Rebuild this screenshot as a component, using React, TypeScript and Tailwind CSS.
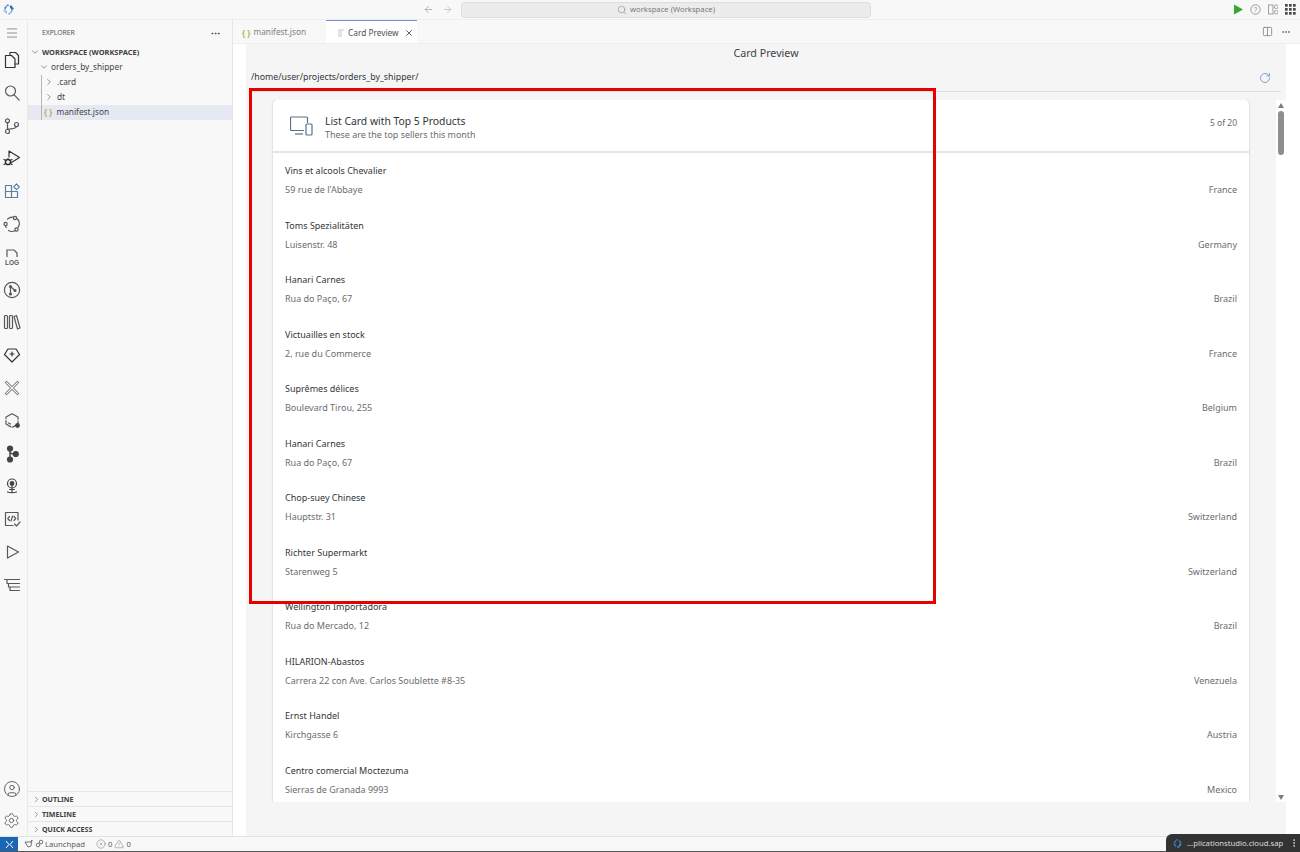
import React from "react";
import { ArrowLeft, ArrowRight, ChevronDown, ChevronRight, CircleUser, CircleX, Ellipsis, EllipsisVertical, Menu, RotateCw, Search, Settings, TriangleAlert, X, Columns2 } from "lucide-react";

const rows: [string, string, string][] = [
  ["Vins et alcools Chevalier", "59 rue de l'Abbaye", "France"],
  ["Toms Spezialitäten", "Luisenstr. 48", "Germany"],
  ["Hanari Carnes", "Rua do Paço, 67", "Brazil"],
  ["Victuailles en stock", "2, rue du Commerce", "France"],
  ["Suprêmes délices", "Boulevard Tirou, 255", "Belgium"],
  ["Hanari Carnes", "Rua do Paço, 67", "Brazil"],
  ["Chop-suey Chinese", "Hauptstr. 31", "Switzerland"],
  ["Richter Supermarkt", "Starenweg 5", "Switzerland"],
  ["Wellington Importadora", "Rua do Mercado, 12", "Brazil"],
  ["HILARION-Abastos", "Carrera 22 con Ave. Carlos Soublette #8-35", "Venezuela"],
  ["Ernst Handel", "Kirchgasse 6", "Austria"],
  ["Centro comercial Moctezuma", "Sierras de Granada 9993", "Mexico"],
];

const S = ({ children, size = 18, vb = 18 }: { children: React.ReactNode; size?: number; vb?: number }) => (
  <svg width={size} height={size} viewBox={`0 0 ${vb} ${vb}`} fill="none" stroke="#55595e" strokeWidth={1.2} strokeLinecap="round" strokeLinejoin="round">
    {children}
  </svg>
);

const activity: React.ReactNode[] = [
  <S key="files"><path d="M7 4V1.500h5.500l3 3v8.500h-3.500" stroke="#333" /><path d="M2.500 4.500h6l3.500 3.500v8.500H2.500z" stroke="#333" /></S>,
  <S key="search"><circle cx="7.500" cy="7" r="5" /><path d="M11.200 10.800l5 5.400" /></S>,
  <S key="scm"><circle cx="4.500" cy="3.800" r="2" /><circle cx="4.500" cy="14.500" r="2" /><circle cx="13.500" cy="7.500" r="2" /><path d="M4.500 5.800v6.700M13.500 9.500c0 2.500-6 2-9 3" /></S>,
  <S key="debug"><path d="M6 2l10.500 6.500L8.500 13.500M6 2v6" stroke="#333" /><circle cx="5" cy="13" r="2.600" stroke="#333" strokeWidth={1.5} /><path d="M1 10.500l1.800 1M1 15.500l1.800-1M9 10.500l-1.800 1M9 15.500l-1.800-1M5 9.500v1" stroke="#333" /></S>,
  <S key="ext"><path d="M2.500 3.500h6v6h-6zM2.500 9.500h6v6h-6zM8.500 9.500h6v6h-6z" stroke="#5d7fa3" /><path d="M13.500 2l2.800 2.800-2.800 2.800-2.800-2.800z" stroke="#5d7fa3" /></S>,
  <S key="graph"><path d="M4.500 4.200a7 7 0 0 1 5.500-2.100M14.500 4A7 7 0 0 1 15 12.500M12 15.800a7 7 0 0 1-6.500-.300M3.200 12.500a7 7 0 0 1-.8-1.500" /><circle cx="12" cy="3" r="1.600" /><circle cx="2.600" cy="9" r="1.600" /><circle cx="13.500" cy="14.500" r="1.600" /></S>,
  <svg key="log" width="18" height="18" viewBox="0 0 18 18" fill="none" stroke="#55595e" strokeWidth="1.2"><path d="M4 9V2h7l3 3v4" /><text x="9" y="16.500" textAnchor="middle" fontSize="6.500" fontWeight="700" fill="#55595e" stroke="none" fontFamily="Liberation Sans">LOG</text></svg>,
  <S key="git"><circle cx="9" cy="9" r="7.600" /><circle cx="7.500" cy="5.500" r="1" fill="#55595e" /><circle cx="7.500" cy="13" r="1" fill="#55595e" /><circle cx="12" cy="9.500" r="1" fill="#55595e" /><path d="M7.500 5.500V13M7.500 5.500L12 9.500" /></S>,
  <S key="lib"><rect x="1.500" y="2.500" width="3" height="13" rx="1" /><rect x="6.500" y="2.500" width="3" height="13" rx="1" /><path d="M11 3.500l2.500-1 3.500 12.500-2.500 1z" /></S>,
  <S key="gem"><path d="M5 3h8l3.500 5.500L9 16 1.500 8.500z" stroke="#333" /><path d="M9 6v4M7 8h4" stroke="#333" /></S>,
  <S key="tools"><path d="M3.500 3.500l11 11M14.500 3.500l-11 11" strokeWidth={2.800} stroke="#666" /><path d="M3.500 3.500l11 11M14.500 3.500l-11 11" strokeWidth={1.100} stroke="#f8f8f8" /></S>,
  <S key="hex"><path d="M9 1.800l6 3.200v7l-6 3.500-6-3.500V5z" strokeDasharray="9 2" /><circle cx="14.500" cy="13.500" r="2.400" fill="#444" stroke="none" /><path d="M5.500 11l2 1" /></S>,
  <svg key="nodes" width="18" height="18" viewBox="0 0 18 18" fill="none" stroke="#444" strokeWidth="1.400"><path d="M7 4v10M7 6c0 3 2 3 5 3" /><circle cx="7" cy="3.500" r="2.400" fill="#444" /><circle cx="7" cy="14.500" r="2.400" fill="#444" /><circle cx="12.800" cy="9" r="2.400" fill="#444" /></svg>,
  <S key="bulb"><circle cx="9" cy="6.500" r="4.500" stroke="#444" /><circle cx="9" cy="6.500" r="1.800" fill="#444" stroke="#444" /><path d="M9 9v6M4.500 15c2 1 7 1 9 0M6.500 12.500h5" stroke="#444" /></S>,
  <svg key="code" width="18" height="18" viewBox="0 0 18 18" fill="none" stroke="#55595e" strokeWidth="1.200" strokeLinecap="round" strokeLinejoin="round"><path d="M10 15.500H2.500v-13h12.500V10" /><path d="M6.500 6.500L4.800 8.500l1.700 2M11 6.500l1.700 2-1.700 2M9.600 6l-1.600 5" /><path d="M11.500 14l2 2 3.500-4" /></svg>,
  <S key="play"><path d="M4.500 3l11 6-11 6z" /></S>,
  <S key="tree"><path d="M1.500 3.500h15M4 7.500h12.500M5.500 11h11M7 14.500h9.500M4 3.500v4M5.500 7.500v3.500M7 11v3.500" /></S>,
];

const Row = ({ pad, children, active }: { pad: string; children: React.ReactNode; active?: boolean }) => (
  <div className={`flex items-center h-[15px] text-[8.300px] leading-[12px] text-[#424549] ${pad} ${active ? "bg-[#e6e8f2]" : ""}`}>{children}</div>
);

const Section = ({ label }: { label: string }) => (
  <div className="flex items-center h-[15px] pl-[4px] gap-[1px] border-t border-[#e6e6e6] text-[7.100px] leading-[12px] font-bold text-[#3c3f44]">
    <ChevronRight size={9} strokeWidth={1.500} color="#555" />
    {label}
  </div>
);

export default function App() {
  return (
    <div className="relative flex flex-col w-[1300px] h-[852px] overflow-hidden bg-white font-['Noto_Sans','Liberation_Sans',sans-serif]">
      {/* Title bar */}
      <div className="flex items-center h-[20px] shrink-0 bg-[#f8f8f8] border-b border-[#eeeeee]">
        <div className="w-[15px] ml-[1px] flex justify-center">
          <svg width="13" height="13" viewBox="0 0 13 13"><path d="M2 5l4-4 1 2H5L3.500 6.500z" fill="#3b82c4" /><path d="M11 8l-4 4-1-2h2l1.500-3.500z" fill="#6aa8de" /><path d="M1 7l2.500-1 2 3.500L4 11z" fill="#9cc7ec" /><path d="M12 6L9.500 7 7.500 3.500 9 2z" fill="#2a6fb0" /></svg>
        </div>
        <div className="flex items-center gap-[8px] ml-[407px]">
          <ArrowLeft size={11} color="#8e9196" strokeWidth={1.400} />
          <ArrowRight size={11} color="#b0b2b6" strokeWidth={1.400} />
        </div>
        <div className="flex items-center justify-center gap-[3px] w-[410px] h-[16px] ml-[8px] rounded-[4px] bg-[#ececec] border border-[#dddddd] text-[7.700px] text-[#777a7e]">
          <Search size={10} color="#888" strokeWidth={1.400} />
          workspace (Workspace)
        </div>
        <div className="flex items-center gap-[7px] ml-auto mr-[4px]">
          <svg width="10" height="11" viewBox="0 0 10 11"><path d="M1 0.500l9 5-9 5z" fill="#35a82f" /></svg>
          <svg width="11" height="11" viewBox="0 0 11 11" fill="none" stroke="#9a9a9a"><circle cx="5.500" cy="5.500" r="4.700" /><text x="5.500" y="8" textAnchor="middle" fontSize="7" fill="#888" stroke="none" fontFamily="Liberation Sans">?</text></svg>
          <svg width="10" height="11" viewBox="0 0 10 11" fill="none" stroke="#9aa0a6"><rect x="0.500" y="1" width="4.500" height="9" /><rect x="6.500" y="1" width="3.500" height="3.500" rx="1.500" /><rect x="6.500" y="6.500" width="3.500" height="3.500" rx="1.500" /></svg>
          <svg width="11" height="11" viewBox="0 0 11 11" fill="#4a4a4a">
            {[0, 4, 8].flatMap((y) => [0, 4, 8].map((x) => <rect key={`${x}-${y}`} x={x} y={y} width="2.700" height="2.700" />))}
          </svg>
        </div>
      </div>

      {/* Middle */}
      <div className="flex flex-1 min-h-0">
        {/* Activity bar */}
        <div className="flex flex-col items-center w-[28px] shrink-0 bg-[#f8f8f8] border-r border-[#eaeaea] pt-[6px] pr-[4px] pb-[7px]">
          <Menu size={14} color="#666" strokeWidth={1.200} />
          <div className="flex flex-col items-center gap-[14.800px] mt-[11px]">
            {activity}
          </div>
          <div className="flex flex-col items-center gap-[14px] mt-auto">
            <CircleUser size={18} color="#55595e" strokeWidth={1.200} />
            <Settings size={17} color="#55595e" strokeWidth={1.200} />
          </div>
        </div>

        {/* Explorer */}
        <div className="flex flex-col w-[205px] shrink-0 bg-[#f8f8f8] border-r border-[#e6e6e6]">
          <div className="flex items-center justify-between h-[24px] pt-[2px] pl-[14px] pr-[11px] text-[6.800px] text-[#54575b]">
            EXPLORER
            <Ellipsis size={11} color="#444" />
          </div>
          <div className="flex flex-col">
            <div className="flex items-center h-[15px] pl-[2px] gap-[2px] text-[7.450px] leading-[12px] font-bold text-[#3c3f44]">
              <ChevronDown size={10} strokeWidth={1.500} color="#555" /> WORKSPACE (WORKSPACE)
            </div>
            <Row pad="pl-[11px] gap-[2px] mt-[0.500px]"><ChevronDown size={10} strokeWidth={1.500} color="#555" /> orders_by_shipper</Row>
            <Row pad="pl-[13px]"><div className="flex items-center gap-[3px] h-full border-l border-[#b5b5b5] pl-[2px]"><ChevronRight size={10} strokeWidth={1.500} color="#555" /> .card</div></Row>
            <Row pad="pl-[13px]"><div className="flex items-center gap-[3px] h-full border-l border-[#b5b5b5] pl-[2px]"><ChevronRight size={10} strokeWidth={1.500} color="#555" /> dt</div></Row>
            <Row pad="pl-[13px]" active><div className="flex items-center gap-[4px] h-full border-l border-[#b5b5b5] pl-[2px]"><span className="text-[8px] font-bold text-[#b5b15a]">{"{ }"}</span> manifest.json</div></Row>
          </div>
          <div className="mt-auto">
            <Section label="OUTLINE" />
            <Section label="TIMELINE" />
            <Section label="QUICK ACCESS" />
          </div>
        </div>

        {/* Editor */}
        <div className="flex flex-col flex-1 min-w-0">
          <div className="flex h-[24px] shrink-0 bg-[#f8f8f8] border-b border-[#eeeeee]">
            <div className="flex items-center w-[93px] pl-[9px] pt-[2px] gap-[3px] text-[8.300px] text-[#7c7f83] whitespace-nowrap">
              <span className="text-[8px] font-bold text-[#b5b15a]">{"{ }"}</span> manifest.json
            </div>
            <div className="flex items-center w-[91px] pl-[11px] pt-[2px] gap-[3px] bg-white border-t border-[#6f8fd0] text-[8.300px] text-[#4c4f53] whitespace-nowrap">
              <svg width="8" height="8" viewBox="0 0 8 8" stroke="#c6c6c6"><path d="M1 1h6M1 3h4M1 5h4M1 7h4" /></svg>
              Card Preview
              <X size={10} color="#444" className="ml-[2px]" />
            </div>
            <div className="flex items-center gap-[8px] ml-auto mr-[9px]">
              <Columns2 size={11} color="#6f5f66" strokeWidth={1.400} />
              <Ellipsis size={10} color="#555" />
            </div>
          </div>
          <div className="flex flex-1 min-h-0">
            <div className="w-[13px] shrink-0 bg-white" />
            <div className="flex flex-col w-[1040px] shrink-0 bg-[#f5f5f5]">
              <div className="text-center text-[10.700px] leading-[16px] mt-[1px] text-[#3f4246]">Card Preview</div>
              <div className="flex items-center justify-between h-[31px] pt-[3px] ml-[5px] mr-[5px] border-b border-[#dedede] text-[8.800px] text-[#33363a]">
                /home/user/projects/orders_by_shipper/
                <RotateCw size={12} color="#4f7fc0" strokeWidth={1.400} className="mr-[10px]" />
              </div>
              <div className="flex flex-1 min-h-0 mt-[8px] mb-[34px]">
                <div className="flex-1 min-w-0 pl-[27px] pr-[27px] overflow-hidden">
                  <div className="bg-white rounded-t-[4px] shadow-[0_0_2px_rgba(0,0,0,0.25)]">
                    <div className="flex items-center h-[53px] pl-[17px] pr-[12px] border-b-2 border-[#e5e5e5]">
                      <svg width="23" height="20" viewBox="0 0 23 20" fill="none" stroke="#54718f" strokeWidth="1.200" className="shrink-0">
                        <path d="M14 14.500H1.500a1 1 0 0 1-1-1V2a1 1 0 0 1 1-1h15a1 1 0 0 1 1 1v5" />
                        <path d="M5 18h8" />
                        <rect x="16" y="8" width="6" height="11" rx="1" />
                      </svg>
                      <div className="flex flex-col ml-[12px] mt-[4px]">
                        <span className="text-[10.350px] leading-[14px] text-[#32363a]">List Card with Top 5 Products</span>
                        <span className="text-[8.950px] leading-[14px] text-[#6a6d70]">These are the top sellers this month</span>
                      </div>
                      <span className="ml-auto mb-[5px] text-[8.500px] text-[#6a6d70]">5 of 20</span>
                    </div>
                    {rows.map(([name, addr, country], i) => (
                      <div key={i} className="flex flex-col h-[54.500px] pt-[11px] px-[12px]">
                        <span className="text-[9px] leading-[14px] text-[#32363a]">{name}</span>
                        <div className="flex justify-between mt-[5px] text-[9px] leading-[14px] text-[#6a6d70]">
                          <span>{addr}</span>
                          <span>{country}</span>
                        </div>
                      </div>
                    ))}
                  </div>
                </div>
                <div className="flex flex-col items-center w-[10px] shrink-0 bg-white pt-[3px]">
                  <div className="w-0 h-0 border-x-[3px] border-x-transparent border-b-[5px] border-b-[#7d7d7d]" />
                  <div className="w-[6px] h-[44px] mt-[3px] rounded-[3px] bg-[#8e8e8e]" />
                  <div className="w-0 h-0 mt-auto mb-[2px] border-x-[3px] border-x-transparent border-t-[5px] border-t-[#7d7d7d]" />
                </div>
              </div>
            </div>
            <div className="flex-1 bg-white" />
          </div>
        </div>
      </div>

      {/* Status bar */}
      <div className="flex items-center h-[16px] shrink-0 bg-[#f8f8f8] border-t border-[#e3e3e3] border-b border-b-[#555] text-[7.700px] leading-[12px] text-[#5a5d61]">
        <div className="flex items-center justify-center w-[18px] h-full bg-[#1a66b5]">
          <svg width="9" height="9" viewBox="0 0 9 9" stroke="#fff" strokeWidth="1" fill="none"><path d="M1 1l3 3.500L1 8M8 1L5 4.500 8 8" /></svg>
        </div>
        <svg width="20" height="10" viewBox="0 0 20 10" fill="none" stroke="#666" strokeWidth="0.900" className="ml-[6px]"><path d="M1 3h6l1-2-1 6-3 1z" /><circle cx="14" cy="6" r="1.800" /><circle cx="17" cy="3" r="1.800" /></svg>
        <span className="ml-[1px]">Launchpad</span>
        <CircleX size={10} strokeWidth={1.100} color="#666" className="ml-[11px]" />
        <span className="ml-[2px]">0</span>
        <TriangleAlert size={10} strokeWidth={1.100} color="#666" className="ml-[2px]" />
        <span className="ml-[2px]">0</span>
      </div>

      {/* Remote indicator overlay */}
      <div className="absolute right-0 bottom-0 flex items-center w-[134px] h-[18px] pl-[6px] rounded-tl-[6px] bg-[#333333] text-[7.700px] leading-[12px] text-[#dddddd]">
        <svg width="11" height="11" viewBox="0 0 13 13"><path d="M2 5l4-4 1 2H5L3.500 6.500z" fill="#3b82c4" /><path d="M11 8l-4 4-1-2h2l1.500-3.500z" fill="#6aa8de" /><path d="M1 7l2.500-1 2 3.500L4 11z" fill="#2a6fb0" /><path d="M12 6L9.500 7 7.500 3.500 9 2z" fill="#2a6fb0" /></svg>
        <span className="ml-[4px] whitespace-nowrap">...plicationstudio.cloud.sap</span>
        <EllipsisVertical size={10} color="#ddd" className="ml-auto mr-[1px]" />
      </div>

      {/* Red annotation */}
      <div className="absolute left-[249px] top-[88px] w-[687px] h-[516px] border-[3px] border-[#e60000]" />
    </div>
  );
}
